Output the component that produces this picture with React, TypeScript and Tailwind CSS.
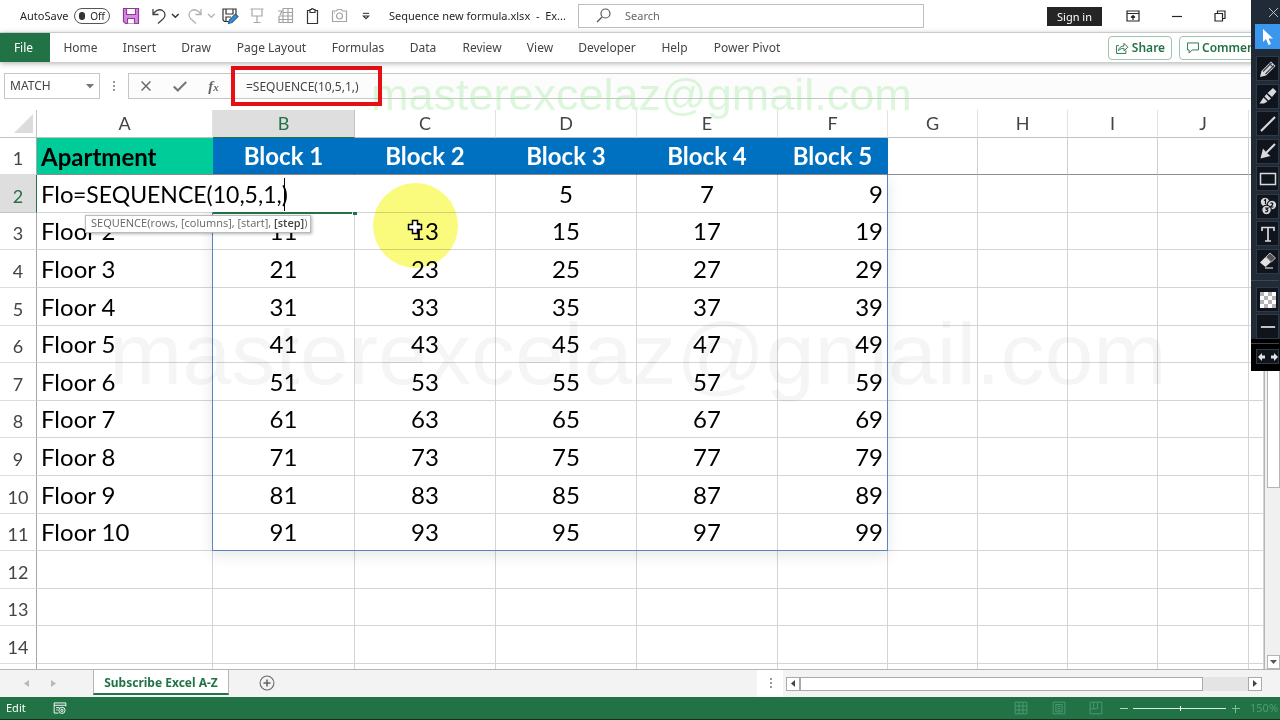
import type { ReactNode } from "react";

const menuTabs = [
  { label: "Home", width: "w-[61px]" },
  { label: "Insert", width: "w-[57px]" },
  { label: "Draw", width: "w-[56px]" },
  { label: "Page Layout", width: "w-[95px]" },
  { label: "Formulas", width: "w-[78px]" },
  { label: "Data", width: "w-[52px]" },
  { label: "Review", width: "w-[66px]" },
  { label: "View", width: "w-[50px]" },
  { label: "Developer", width: "w-[84px]" },
  { label: "Help", width: "w-[51px]" },
  { label: "Power Pivot", width: "w-[94px]" },
];

const columns = [
  { name: "A", width: "w-[176px]" },
  { name: "B", width: "w-[142px]" },
  { name: "C", width: "w-[141px]" },
  { name: "D", width: "w-[141px]" },
  { name: "E", width: "w-[141px]" },
  { name: "F", width: "w-[110px]" },
  { name: "G", width: "w-[90px]" },
  { name: "H", width: "w-[90px]" },
  { name: "I", width: "w-[90px]" },
  { name: "J", width: "w-[91px]" },
  { name: "", width: "" },
];

const TALL = "h-[38px]";
const SHORT = "h-[37px]";

const rows = [
  { label: "1", height: SHORT, cells: ["Apartment", "Block 1", "Block 2", "Block 3", "Block 4", "Block 5"] },
  { label: "2", height: TALL, cells: ["Flo", "", "", "5", "7", "9"] },
  { label: "3", height: SHORT, cells: ["Floor 2", "11", "13", "15", "17", "19"] },
  { label: "4", height: TALL, cells: ["Floor 3", "21", "23", "25", "27", "29"] },
  { label: "5", height: TALL, cells: ["Floor 4", "31", "33", "35", "37", "39"] },
  { label: "6", height: SHORT, cells: ["Floor 5", "41", "43", "45", "47", "49"] },
  { label: "7", height: TALL, cells: ["Floor 6", "51", "53", "55", "57", "59"] },
  { label: "8", height: SHORT, cells: ["Floor 7", "61", "63", "65", "67", "69"] },
  { label: "9", height: TALL, cells: ["Floor 8", "71", "73", "75", "77", "79"] },
  { label: "10", height: TALL, cells: ["Floor 9", "81", "83", "85", "87", "89"] },
  { label: "11", height: SHORT, cells: ["Floor 10", "91", "93", "95", "97", "99"] },
  { label: "12", height: TALL, cells: [] },
  { label: "13", height: SHORT, cells: [] },
  { label: "14", height: TALL, cells: [] },
  { label: "", height: TALL, cells: [] },
];

function Icon({ size = 18, label, children }: { size?: number; label?: string; children: ReactNode }) {
  return (
    <svg
      width={size}
      height={size}
      viewBox="0 0 18 18"
      fill="none"
      stroke="currentColor"
      strokeWidth="1.2"
      aria-label={label}
      className="shrink-0"
    >
      {children}
    </svg>
  );
}

function TitleBar() {
  return (
    <header className="flex h-[33px] shrink-0 items-center border-b border-[#e4e4e4] bg-white text-[11px] text-[#262626]">
      <label className="flex w-[116px] items-center justify-between pl-5 pr-[6px]">
        <span>AutoSave</span>
        <button
          aria-label="AutoSave off"
          className="flex h-4 w-9 items-center gap-[5px] rounded-full border border-[#555] px-1 text-[10px] leading-none"
        >
          <span className="size-2 rounded-full bg-[#333]" />
          Off
        </button>
      </label>
      <div className="flex w-[273px] items-center pl-[6px]">
        <button aria-label="Save" className="w-7 text-[#8f3a9b]">
          <Icon>
            <path d="M1.5 1.5h15v15h-13l-2-2z" fill="#d78be0" />
            <path d="M4.5 1.5h9v6h-9z" fill="#fff" />
            <path d="M5.5 16.500v-5h7v5" fill="#fff" />
          </Icon>
        </button>
        <button aria-label="Undo" className="w-[20px] text-[#444]">
          <Icon>
            <path d="M3 2v5.500h5.500M3 7.500C5 4 9 1.500 12.500 3.500c3.500 2.200 3 6 .5 8.500l-5 4.500" strokeWidth="1.300" />
          </Icon>
        </button>
        <button aria-label="Undo options" className="w-[16px] text-[#333]">
          <Icon size={12}>
            <path d="M3 6l5 5 5-5" strokeWidth="2.200" />
          </Icon>
        </button>
        <button aria-label="Redo" className="w-[20px] text-[#b0b0b0]">
          <Icon>
            <path d="M15 2v5.500H9.500M15 7.500C13 4 9 1.500 5.500 3.500c-3.500 2.200-3 6-.5 8.500l5 4.500" strokeWidth="1.300" />
          </Icon>
        </button>
        <button aria-label="Redo options" className="w-[15px] text-[#b5b5b5]">
          <Icon size={12}>
            <path d="M3 6l5 5 5-5" strokeWidth="2.200" />
          </Icon>
        </button>
        <button aria-label="Save as" className="w-7 text-[#333]">
          <Icon>
            <path d="M8 14.500H3.500l-1.500-1.500V2h13v6M5 2v5h7V2M5 14v-4h5" />
            <path d="M7.500 16.500l1-3.500 6-6 2.500 2.500-6 6z" fill="#3f8fd0" stroke="#27679c" />
          </Icon>
        </button>
        <button aria-label="Start from beginning" className="w-7 text-[#a8a8a8]">
          <Icon>
            <path d="M1.500 2h13M3 2v7h10V2M8 9v6M4.500 15.500h7" />
          </Icon>
        </button>
        <button aria-label="Insert table" className="w-[27px] text-[#a3a3a3]">
          <Icon>
            <path d="M6 1.500h9.500v14H2V9M2 12.500h13.500M2 9h13.500M6 5.500h9.500M6 1.500v14M11 1.500v14" />
            <path d="M1 4h4l-2 4" />
          </Icon>
        </button>
        <button aria-label="Paste" className="w-[27px] text-[#333]">
          <Icon>
            <path d="M6 3.500H3.500v13h10v-13H11M6 2.500h1.500a1 1 0 0 1 2 0H11v3H6z" />
          </Icon>
        </button>
        <button aria-label="Camera" className="w-[27px] text-[#a3a3a3]">
          <Icon>
            <path d="M1.500 4h4l1-1.500h4l1 1.500h4v10.500h-14z" />
            <circle cx="8.500" cy="9" r="3" />
            <path d="M3 6h1" />
          </Icon>
        </button>
        <button aria-label="Customize toolbar" className="text-[#333]">
          <Icon size={16}>
            <path d="M5.500 6h7" />
            <path d="M6 9h6l-3 3z" />
          </Icon>
        </button>
      </div>
      <h1 className="w-[189px] shrink-0 whitespace-pre">Sequence new formula.xlsx  -  Ex...</h1>
      <label className="flex h-6 w-[346px] shrink-0 items-center border border-[#bdbdbd] pl-4 text-[#555]">
        <Icon size={18}>
          <circle cx="10.500" cy="6.500" r="4.500" />
          <path d="M7 10l-5 5" />
        </Icon>
        <input
          aria-label="Search"
          placeholder="Search"
          className="ml-3 min-w-0 flex-1 bg-transparent outline-none placeholder:text-[#666]"
        />
      </label>
      <div className="ml-auto flex items-center pr-[51px]">
        <button className="h-[19px] w-[55px] bg-[#252525] leading-none text-white">Sign in</button>
        <button aria-label="Ribbon display options" className="ml-[22px]">
          <Icon size={18}>
            <path d="M3 4h12v10H3zM3 6.500h12M9 13V8.500M7 10.500l2-2 2 2" />
          </Icon>
        </button>
        <button aria-label="Minimize" className="ml-[26px]">
          <Icon size={18}>
            <path d="M4 9.500h10" />
          </Icon>
        </button>
        <button aria-label="Restore" className="ml-[25px]">
          <Icon size={18}>
            <path d="M4 6.500h7.500V14H4zM6.500 6.500V4H14v7.500h-2.500" />
          </Icon>
        </button>
      </div>
    </header>
  );
}

function RibbonTabs() {
  return (
    <nav className="relative z-10 flex h-[29px] shrink-0 items-center bg-white text-[12px] text-[#444] shadow-[0_1px_6px_rgba(0,0,0,0.35)]">
      <button className="h-full w-[50px] bg-[#217346] pr-[3px] text-white">File</button>
      {menuTabs.map((tab) => (
        <button key={tab.label} className={`${tab.width} shrink-0 whitespace-nowrap text-center`}>
          {tab.label}
        </button>
      ))}
      <div className="ml-auto flex h-full shrink-0 items-center gap-[7px] font-semibold text-[#217346]">
        <button className="flex h-6 w-16 items-center justify-center gap-[3px] rounded-sm border border-[#9cc5ae]">
          <Icon size={14}>
            <path d="M5 6H2v10h12v-4M4.500 12.500c.5-4 3-6 7-6V3l5 5-5 4.500V9.500c-3 0-5 .5-7 3z" />
          </Icon>
          Share
        </button>
        <button className="flex h-6 w-[101px] items-center gap-[2px] whitespace-nowrap rounded-sm border border-[#9cc5ae] pl-[6px]">
          <Icon size={14}>
            <path d="M2 2.500h14v9H8l-4 4v-4H2z" />
          </Icon>
          Comments
        </button>
      </div>
    </nav>
  );
}

function FormulaBar() {
  return (
    <div className="relative flex h-[48px] shrink-0 items-start bg-white pt-[11px] text-[12px] text-[#444]">
      <label className="ml-1 flex h-[26px] w-24 items-center border border-[#c6c6c6] bg-white">
        <input aria-label="Name box" defaultValue="MATCH" className="w-[81px] bg-transparent pl-[5px] outline-none" />
        <svg width="8" height="5" viewBox="0 0 8 5" className="text-[#777]">
          <path d="M0 0h8L4 4.500z" fill="currentColor" />
        </svg>
      </label>
      <svg width="28" height="26" viewBox="0 0 28 26" className="shrink-0 text-[#999]">
        <path d="M13 8h2v2h-2zM13 12h2v2h-2zM13 16h2v2h-2z" fill="currentColor" />
      </svg>
      <div className="flex h-[26px] min-w-0 flex-1 items-center border border-r-0 border-[#c6c6c6] bg-[#fcfcfc]">
        <button aria-label="Cancel" className="flex w-[34px] justify-center text-[#666]">
          <Icon size={16}>
            <path d="M4 4l10 10M14 4L4 14" strokeWidth="1.600" />
          </Icon>
        </button>
        <button aria-label="Enter" className="flex w-[34px] justify-center text-[#777]">
          <Icon size={16}>
            <path d="M2 9.500l4.500 4.500L16 4.500" strokeWidth="2.400" />
          </Icon>
        </button>
        <button aria-label="Insert function" className="w-[33px] font-['Liberation_Serif',serif] text-[15px] font-bold italic leading-none text-[#666]">
          f<span className="text-[11px]">x</span>
        </button>
        <input
          aria-label="Formula"
          defaultValue="=SEQUENCE(10,5,1,)"
          className="h-full min-w-0 flex-1 bg-transparent pl-4 outline-none"
        />
      </div>
      <p className="pointer-events-none absolute left-[371px] top-[9px] font-['Liberation_Sans',sans-serif] text-[45px] leading-[48px] text-[#8ee58e]/30">
        masterexcelaz@gmail.com
      </p>
      <div className="pointer-events-none absolute left-[231px] top-[4px] h-[40px] w-[151px] border-4 border-[#e60f14]" />
    </div>
  );
}

function cellStyle(row: number, col: number) {
  if (row === 0 && col === 0) return "bg-[#00cc99] text-left font-bold text-black border-r-[#00cc99] border-b-[#8c8c8c] pt-[2px]";
  if (row === 0 && col < 6) return "bg-[#0070c0] text-center font-bold text-white border-r-[#0070c0] border-b-[#8c8c8c]";
  if (row === 0) return "border-r-[#d0d0d0] border-b-[#8c8c8c]";
  if (col === 0) return "text-left border-[#d4d4d4]";
  if (col === 5) return "text-right border-[#d4d4d4]";
  return "text-center border-[#d4d4d4]";
}

function CellEditor() {
  return (
    <div className="absolute left-[36px] top-0 z-10 h-[37px] w-[422px] bg-white">
      <input
        aria-label="Cell B2"
        defaultValue="=SEQUENCE(10,5,1,)"
        className="size-full bg-transparent text-[23px] outline-none"
      />
      <span className="absolute left-[211px] top-[3px] h-[33px] w-px bg-black" />
      <span className="absolute left-[140px] top-[37px] h-[2px] w-[139px] bg-[#217346]" />
      <span className="absolute left-[280px] top-[37px] h-[3px] w-[4px] bg-[#217346]" />
      <div className="absolute left-[12px] top-[40px] flex h-[18px] w-[226px] items-start whitespace-pre border border-[#bbb] bg-white pl-[5px] font-['Open_Sans',sans-serif] text-[11px] leading-[14px] text-[#666] shadow-[1px_1px_3px_rgba(0,0,0,0.3)]">
        SEQUENCE(rows, [columns], [start], <span className="font-semibold text-[#444]">[step]</span>)
      </div>
    </div>
  );
}

function Sheet() {
  return (
    <main className="flex min-h-0 flex-1 bg-white">
      <div className="relative min-w-0 flex-1 overflow-hidden border-r border-[#b5b5b5]">
        <table className="w-full table-fixed border-separate border-spacing-0 font-['Lato',sans-serif]">
          <thead>
            <tr className="h-[28px] text-[18px] leading-none text-[#444]">
              <th className="w-[37px] border-b border-r border-[#c4c4c4] p-0">
                <svg width="36" height="27" viewBox="0 0 36 27" aria-hidden="true">
                  <path d="M33 4v19H14z" fill="#dcdcdc" />
                </svg>
              </th>
              {columns.map((c) => (
                <th
                  key={c.name || "end"}
                  className={`${c.width} border-b border-r p-0 pb-[2px] font-normal ${
                    c.name === "B"
                      ? "border-b-[#217346] border-r-[#c4c4c4] bg-[#dedede] text-[#217346]"
                      : "border-b-[#c0c0c0] border-r-[#e2e2e2]"
                  }`}
                >
                  {c.name}
                </th>
              ))}
            </tr>
          </thead>
          <tbody className="text-[24px] leading-none text-black">
            {rows.map((row, r) => (
              <tr key={r} className={row.height}>
                <th
                  className={`border-b border-r p-0 pt-[4px] text-[18px] font-normal ${
                    r === 1
                      ? "border-b-[#c4c4c4] border-r-[#217346] bg-[#dedede] text-[#217346]"
                      : "border-b-[#dedede] border-r-[#a8a8a8] text-[#444]"
                  }`}
                >
                  {row.label}
                </th>
                {columns.map((c, i) => (
                  <td key={c.name || "end"} className={`relative whitespace-nowrap border-b border-r p-0 px-1 ${cellStyle(r, i)}`}>
                    {row.cells[i]}
                    {r === 1 && i === 0 && <CellEditor />}
                  </td>
                ))}
              </tr>
            ))}
          </tbody>
        </table>
        <div className="pointer-events-none absolute left-[212px] top-[65px] h-[376px] w-[676px] border border-t-0 border-[#5b84c4] shadow-[0_4px_14px_rgba(0,0,0,0.1)]" />
        <p className="pointer-events-none absolute left-[109px] top-[194px] font-['Liberation_Sans',sans-serif] text-[88px] leading-[100px] text-black/4">
          masterexcelaz@gmail.com
        </p>
        <div className="pointer-events-none absolute left-[373px] top-[73px] z-20 size-[85px] rounded-full bg-[#fafa7d] mix-blend-multiply" />
        <svg className="pointer-events-none absolute left-[407px] top-[109px] z-30" width="16" height="16" viewBox="0 0 16 16">
          <path d="M5.500 1.500h5v4h4v5h-4v4h-5v-4h-4v-5h4z" fill="#fff" stroke="#000" strokeWidth="1.500" />
        </svg>
      </div>
      <div className="flex w-[15px] shrink-0 flex-col bg-[#f0f0f0] pl-[2px]">
        <div className="h-[378px] border border-[#b5b5b5] bg-white" />
        <button aria-label="Scroll down" className="mt-auto flex h-[14px] items-center justify-center border border-[#b5b5b5] bg-white">
          <svg width="7" height="4" viewBox="0 0 7 4">
            <path d="M0 0h7L3.500 4z" fill="#555" />
          </svg>
        </button>
      </div>
    </main>
  );
}

function SheetTabs() {
  return (
    <div className="flex h-[28px] shrink-0 items-start border-t border-[#b5b5b5] bg-[#f3f3f3]">
      <div className="flex h-full w-[93px] items-center gap-[22px] pl-[24px] text-[#b8b8b8]">
        <svg width="5" height="7" viewBox="0 0 5 7" aria-label="Previous sheet">
          <path d="M5 0v7L0 3.500z" fill="currentColor" />
        </svg>
        <svg width="5" height="7" viewBox="0 0 5 7" aria-label="Next sheet">
          <path d="M0 0v7l5-3.500z" fill="currentColor" />
        </svg>
      </div>
      <button className="h-[25px] w-[136px] whitespace-nowrap border-x border-b-2 border-x-[#b5b5b5] border-b-[#217346] bg-white pt-[2px] text-[12px] font-bold text-[#217346]">
        Subscribe Excel A-Z
      </button>
      <button aria-label="New sheet" className="ml-[30px] mt-[5px] text-[#666]">
        <Icon size={16}>
          <circle cx="9" cy="9" r="7.800" />
          <path d="M9 5v8M5 9h8" strokeWidth="1.800" />
        </Icon>
      </button>
      <div className="ml-auto flex h-full w-[523px] items-center">
        <svg width="26" height="27" viewBox="0 0 26 27" className="mr-[3px]">
          <path d="M0 0h26v27H0z" fill="#fff" />
          <path d="M13 8h2v2h-2zM13 12h2v2h-2zM13 16h2v2h-2z" fill="#999" />
        </svg>
        <button aria-label="Scroll left" className="flex size-[14px] items-center justify-center border border-[#aaa] bg-white">
          <svg width="4" height="7" viewBox="0 0 4 7">
            <path d="M4 0v7L0 3.500z" fill="#444" />
          </svg>
        </button>
        <div className="h-[14px] flex-1 bg-[#e4e4e4] pr-[45px]">
          <div className="h-full border border-[#aaa] bg-white" />
        </div>
        <button aria-label="Scroll right" className="mr-[18px] flex size-[14px] items-center justify-center border border-[#aaa] bg-white">
          <svg width="4" height="7" viewBox="0 0 4 7">
            <path d="M0 0v7l4-3.500z" fill="#444" />
          </svg>
        </button>
      </div>
    </div>
  );
}

function StatusBar() {
  return (
    <footer className="flex h-[23px] shrink-0 items-center border-b border-[#16301f] bg-[#217346] text-[11px] text-white">
      <span className="w-[53px] pl-[6px]">Edit</span>
      <Icon size={14}>
        <path d="M7 15.500H1.500v-13h15V7M1.500 5.500h15M4 8.500h4M4 11.500h2" />
        <circle cx="11.500" cy="12" r="4" />
        <circle cx="11.500" cy="12" r="1.500" />
      </Icon>
      <div className="ml-auto flex items-center text-[#4f9c72]">
        <button aria-label="Normal view" className="w-[38px]">
          <Icon size={14}>
            <path d="M1.500 1.500h15v15h-15zM6.500 1.500v15M11.500 1.500v15M1.500 6.500h15M1.500 11.500h15" />
          </Icon>
        </button>
        <button aria-label="Page layout view" className="w-[37px]">
          <Icon size={14}>
            <path d="M1.500 1.500h15v15h-15zM5 4.500h8v9.500H5zM7 7h4M7 9.500h4M7 12h4" />
          </Icon>
        </button>
        <button aria-label="Page break view" className="w-[30px]">
          <Icon size={14}>
            <path d="M1.500 1.500h15v15h-15zM6 1.500V10M1.500 10H11V1.500" />
          </Icon>
        </button>
        <button aria-label="Zoom out" className="flex w-[14px] text-[#a9dcbf]">
          <svg width="9" height="9" viewBox="0 0 9 9" stroke="currentColor">
            <path d="M1 4.500h8" />
          </svg>
        </button>
        <div className="relative h-[9px] w-[93px]">
          <div className="mt-1 h-px bg-[#d5f0e0]" />
          <div className="absolute left-[47px] top-[2px] h-[5px] w-px bg-white" />
        </div>
        <button aria-label="Zoom in" className="ml-[5px] flex w-[19px] text-[#7fc09b]">
          <svg width="9" height="9" viewBox="0 0 9 9" stroke="currentColor">
            <path d="M1 4.500h8M4.500 1v8" />
          </svg>
        </button>
        <span className="w-[30px]">150%</span>
      </div>
    </footer>
  );
}

const drawingTools: { name: string; art: ReactNode }[] = [
  {
    name: "Pencil",
    art: (
      <>
        <path d="M1 17l1.500-6L12 1.500l4.500 4.500-9.500 9.500z" fill="#d8dadd" stroke="none" />
        <path d="M4 11.500l8.500-8.500M6.500 14l8.500-8.500M10.500 3.500l4 4" stroke="#39414c" />
      </>
    ),
  },
  {
    name: "Highlighter",
    art: (
      <path d="M8.500 6L14 1l3.500 3.500L13 10zM7.500 7l4.500 4.500-2.500 2-4-4zM4.500 10.500l4 4-3.500 2H.5z" fill="#d8dadd" stroke="none" />
    ),
  },
  { name: "Line", art: <path d="M2 16L16 2" strokeWidth="2.200" /> },
  {
    name: "Arrow",
    art: (
      <>
        <path d="M7 11l9-9" strokeWidth="2" />
        <path d="M1.500 16.500L4 6.500l2.500 3 2 2 3 2.500z" fill="#d8dadd" stroke="none" />
      </>
    ),
  },
  { name: "Rectangle", art: <path d="M1.500 3.500h15v11h-15z" strokeWidth="1.500" /> },
  {
    name: "Numbering",
    art: (
      <>
        <circle cx="6" cy="5" r="4.800" fill="#d8dadd" stroke="#10151d" />
        <circle cx="13" cy="8" r="4.800" fill="#d8dadd" stroke="#10151d" />
        <circle cx="7.500" cy="13" r="4.800" fill="#d8dadd" stroke="#10151d" />
        <path d="M5 3.500L6.500 2.500V7M11.500 6.500c2-1.500 3 .5 1.500 2l-1.500 1.500h3M6 11h3l-1.500 1.500c2.500.5 1 3-1.500 2" stroke="#10151d" />
      </>
    ),
  },
  { name: "Text", art: <path d="M3 6V2.500h12V6M9 2.500V16M6 16h6" strokeWidth="1.700" /> },
  {
    name: "Eraser",
    art: (
      <>
        <path d="M1 10.500l5.500-5.500 5.500 5-5.500 5z" fill="#e2e2e2" stroke="none" />
        <path d="M7 5l4-4 5.500 5-4 4z" fill="#555" stroke="#d8dadd" strokeWidth=".8" />
        <path d="M6 16h8" />
      </>
    ),
  },
];

const toolButton = "flex h-[25px] w-[23px] shrink-0 items-center justify-center border border-[#303a47] bg-[#10151d] text-[#d8dadd]";

function DrawingToolbar() {
  return (
    <aside
      aria-label="Drawing tools"
      className="absolute right-0 top-0 z-40 flex h-[371px] w-[29px] flex-col items-end overflow-hidden bg-[#202b37] pr-px"
    >
      <button aria-label="Close" className="mb-px flex h-[23px] w-[16px] shrink-0 items-center justify-end text-[#b8bec6]">
        <svg width="12" height="12" viewBox="0 0 12 12" fill="none" stroke="currentColor">
          <path d="M2 2l9 9M11 2l-9 9" />
        </svg>
      </button>
      <button aria-label="Select" className="-mr-px mb-[7px] flex h-[25px] w-[25px] shrink-0 items-center justify-center bg-[#3b97ee]">
        <svg width="12" height="18" viewBox="0 0 12 18">
          <path d="M1 1v13l3-3 2.500 6 2.500-1-2.500-5.500H11z" fill="#fff" />
        </svg>
      </button>
      <div className="flex h-[218px] shrink-0 flex-col justify-between">
        {drawingTools.map((tool) => (
          <button key={tool.name} aria-label={tool.name} className={toolButton}>
            <Icon size={18}>{tool.art}</Icon>
          </button>
        ))}
      </div>
      <div className="my-[6px] h-px w-[28px] shrink-0 bg-[#3b4856]" />
      <button aria-label="Opacity" className={toolButton}>
        <svg width="16" height="16" viewBox="0 0 16 16">
          <path d="M0 0h16v16H0z" fill="#fff" />
          <path
            d="M0 0h4v4H0zM8 0h4v4H8zM4 4h4v4H4zM12 4h4v4h-4zM0 8h4v4H0zM8 8h4v4H8zM4 12h4v4H4zM12 12h4v4h-4z"
            fill="#b4b4b4"
          />
        </svg>
      </button>
      <button aria-label="Line width" className={`mt-[2px] ${toolButton}`}>
        <Icon size={16}>
          <path d="M1 9h16" strokeWidth="2" />
        </Icon>
      </button>
      <div className="-mr-px flex w-[29px] flex-1 flex-col items-end bg-black pr-px pt-[4px]">
        <div className="h-px w-full bg-[#444]" />
        <button aria-label="Resize toolbar" className="mt-[5px] flex h-[15px] w-[23px] items-center justify-center border border-[#303a47] bg-[#10151d]">
          <svg width="20" height="8" viewBox="0 0 20 8" fill="#e2e2e2">
            <path d="M0 4l4-4v2.500h3v3H4V8zM20 4l-4-4v2.500h-3v3h3V8z" />
          </svg>
        </button>
      </div>
    </aside>
  );
}

export default function App() {
  return (
    <div className="relative flex h-screen flex-col overflow-hidden bg-white font-['Noto_Sans',sans-serif]">
      <TitleBar />
      <RibbonTabs />
      <FormulaBar />
      <Sheet />
      <SheetTabs />
      <StatusBar />
      <DrawingToolbar />
    </div>
  );
}
